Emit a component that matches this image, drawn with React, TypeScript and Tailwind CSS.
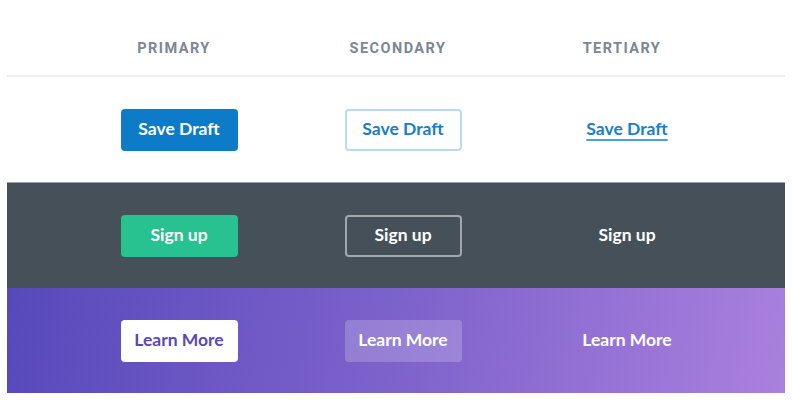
import React from "react";

const font = { fontFamily: "Lato, 'Noto Sans', sans-serif" };

const btnBase =
  "w-[117px] h-[42px] rounded-[4px] flex items-center justify-center text-[17.5px] font-bold";

const Row = ({
  className,
  children,
}: {
  className: string;
  children: React.ReactNode;
}) => (
  <div className={`flex items-center h-[105px] pl-[60px] ${className}`}>
    {children}
  </div>
);

const Cell = ({ children }: { children: React.ReactNode }) => (
  <div className="w-[224px] flex justify-center">{children}</div>
);

const App = () => {
  return (
    <div className="w-[792px] h-[405px] bg-white px-[7px]">
      <div className="flex items-start h-[75px] pt-[40px] pl-[55px] font-['Roboto',sans-serif] text-[14.5px] leading-[18px] font-bold tracking-[0.1em] text-[#7c8694]">
        <Cell>PRIMARY</Cell>
        <Cell>SECONDARY</Cell>
        <Cell>TERTIARY</Cell>
      </div>
      <div className="h-[2px] bg-[#eeeff3]" />

      <div style={font}>
        <Row className="bg-white">
          <Cell>
            <button className={`${btnBase} bg-[#0e7bc8] text-white`}>
              Save Draft
            </button>
          </Cell>
          <Cell>
            <button
              className={`${btnBase} bg-white border-2 border-[#b9daf0] text-[#1a7dc4]`}
            >
              Save Draft
            </button>
          </Cell>
          <Cell>
            <span className="text-[17.5px] font-bold text-[#1a7fc8] underline decoration-[#4ba1dd] decoration-2 underline-offset-[4px]">
              Save Draft
            </span>
          </Cell>
        </Row>

        <Row className="bg-[#465058] border-t border-[#9aa0a6] h-[106px]">
          <Cell>
            <button className={`${btnBase} bg-[#27c28f] text-white`}>
              Sign up
            </button>
          </Cell>
          <Cell>
            <button
              className={`${btnBase} border-2 border-[#a2a7ad] text-white`}
            >
              Sign up
            </button>
          </Cell>
          <Cell>
            <span className="text-[17.5px] font-bold text-white">Sign up</span>
          </Cell>
        </Row>

        <Row className="bg-linear-[100deg] from-[#5749bb] via-[#7d62cb] to-[#aa80de]">
          <Cell>
            <button className={`${btnBase} bg-white text-[#5a48b8]`}>
              Learn More
            </button>
          </Cell>
          <Cell>
            <button className={`${btnBase} bg-white/20 text-white`}>
              Learn More
            </button>
          </Cell>
          <Cell>
            <span className="text-[17.5px] font-bold text-white">
              Learn More
            </span>
          </Cell>
        </Row>
      </div>
    </div>
  );
};

export default App;
